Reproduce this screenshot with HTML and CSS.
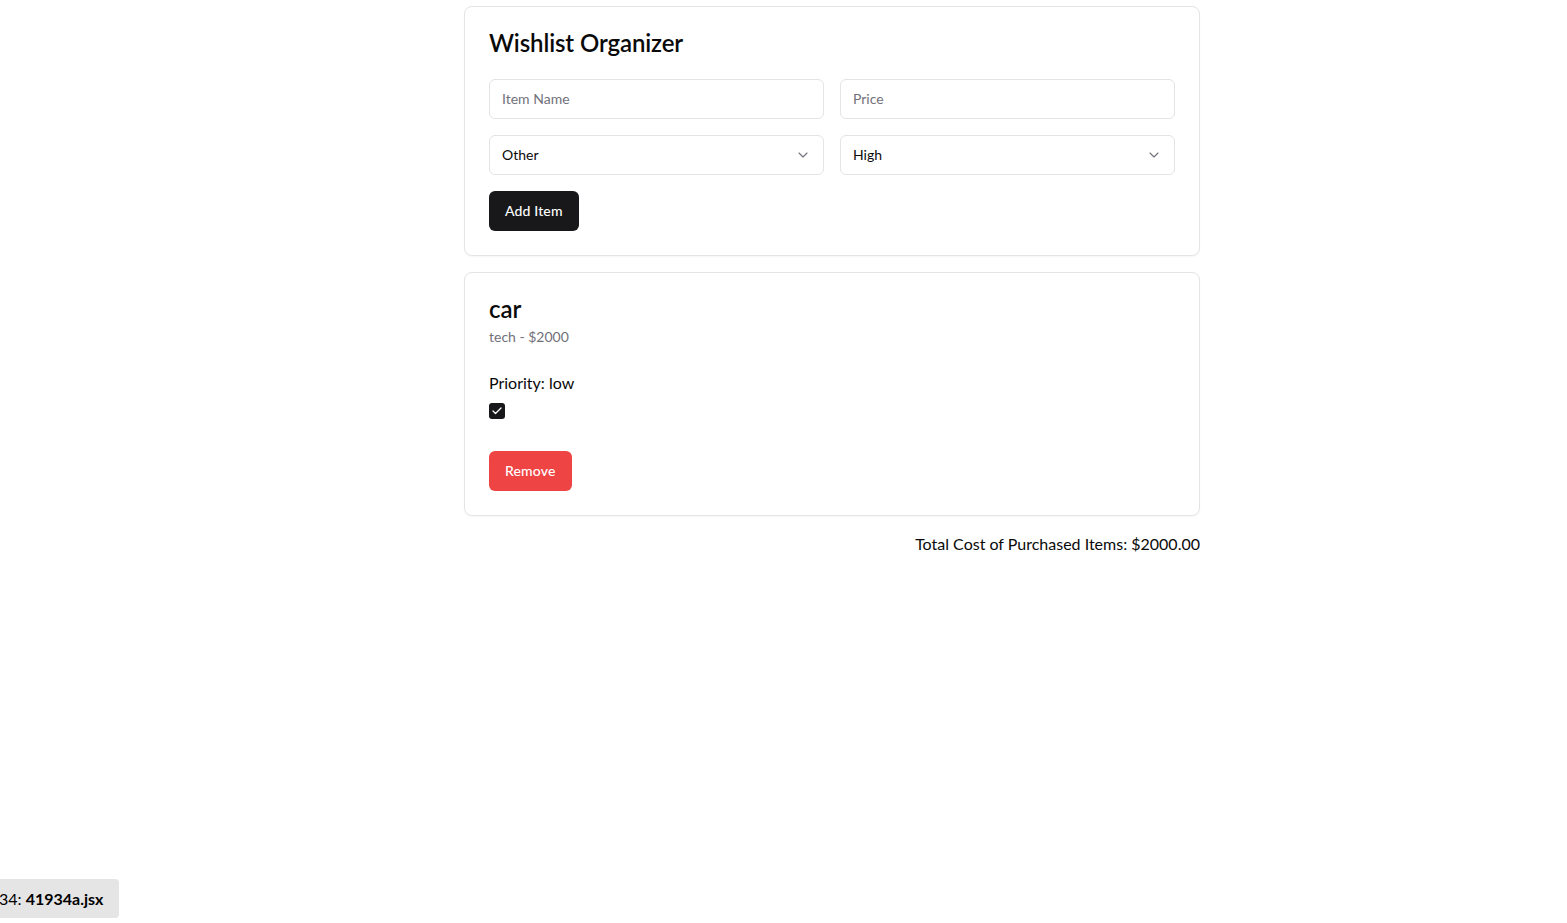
FILE: index.html
```html
<!DOCTYPE html>
<html lang="en">
<head>
<meta charset="utf-8">
<title>Wishlist Organizer</title>
<link rel="stylesheet" href="styles.css">
</head>
<body>
<main class="page">
  <section class="card form-card">
    <div class="card-header">
      <h1 class="title">Wishlist Organizer</h1>
    </div>
    <div class="card-content">
      <div class="grid">
        <input class="field" type="text" placeholder="Item Name">
        <input class="field" type="text" placeholder="Price">
        <div class="select"><span>Other</span>
          <svg width="16" height="16" viewBox="0 0 24 24" fill="none" stroke="#71717a" stroke-width="1.6" stroke-linecap="round" stroke-linejoin="round"><path d="m6 9 6 6 6-6"/></svg>
        </div>
        <div class="select"><span>High</span>
          <svg width="16" height="16" viewBox="0 0 24 24" fill="none" stroke="#71717a" stroke-width="1.6" stroke-linecap="round" stroke-linejoin="round"><path d="m6 9 6 6 6-6"/></svg>
        </div>
      </div>
      <button class="btn btn-dark">Add Item</button>
    </div>
  </section>

  <section class="card item-card">
    <div class="card-header item-header">
      <h2 class="title">car</h2>
      <p class="item-meta">tech - $2000</p>
    </div>
    <div class="card-content item-content">
      <p class="item-priority">Priority: low</p>
      <div class="check-row">
        <span class="checkbox">
          <svg width="12" height="12" viewBox="0 0 24 24" fill="none" stroke="#fff" stroke-width="2.5" stroke-linecap="round" stroke-linejoin="round"><path d="M20 6 9 17l-5-5"/></svg>
        </span>
      </div>
    </div>
    <div class="card-footer">
      <button class="btn btn-red">Remove</button>
    </div>
  </section>

  <p class="total">Total Cost of Purchased Items: $2000.00</p>
</main>

<div class="badge"><span class="badge-text">34: <b>41934a.jsx</b></span></div>
</body>
</html>
```

FILE: styles.css
```css
* { box-sizing: border-box; }
html, body { margin: 0; padding: 0; background: #fff; }
body {
  font-family: Lato, "Open Sans", sans-serif;
  color: #0a0a0a;
}
.page {
  width: 768px;
  margin-left: 448px;
  padding: 6px 16px 16px;
  display: flex;
  flex-direction: column;
  gap: 16px;
}
.card {
  border: 1px solid #e4e4e7;
  border-radius: 8px;
  background: #fff;
  box-shadow: 0 1px 2px rgba(0,0,0,0.04);
}
.card-header {
  padding: 24px;
  display: flex;
  flex-direction: column;
  gap: 6px;
}
.card-content { padding: 0 24px 24px; }
.card-footer { padding: 0 24px 24px; display: flex; }
.title {
  margin: 0;
  font-size: 24px;
  line-height: 23px;
  font-weight: 600;
  letter-spacing: -0.1px;
}
.item-header .title { line-height: 24px; }
.card-header .title { padding-bottom: 1px; }
.item-header .title { padding-bottom: 0; }
.grid {
  display: grid;
  grid-template-columns: 1fr 1fr;
  gap: 16px;
  margin-bottom: 16px;
}
.field, .select {
  height: 40px;
  border: 1px solid #e4e4e7;
  border-radius: 6px;
  padding: 0 12px 1px;
  font: inherit;
  font-size: 14px;
  color: #0a0a0a;
  background: #fff;
}
.field::placeholder { color: #71717a; }
.select {
  display: flex;
  align-items: center;
  justify-content: space-between;
}
.select svg { margin-top: 1px; }
.btn {
  height: 40px;
  border: none;
  border-radius: 6px;
  padding: 0 16px 1px;
  font: inherit;
  font-size: 14px;
  font-weight: 500;
  letter-spacing: 0.15px;
  color: #fff;
}
.btn-dark { background: #18181b; }
.btn-red { background: #ef4444; }
.item-meta { margin: 0; font-size: 14px; line-height: 20px; color: #71717a; }
.item-priority { margin: 0; font-size: 16px; line-height: 24px; }
.check-row { margin-top: 8px; height: 24px; }
.checkbox {
  width: 16px; height: 16px;
  border-radius: 3px;
  background: #18181b;
  display: flex; align-items: center; justify-content: center;
}
.total { margin: 0; text-align: right; font-size: 16px; line-height: 24px; }
.badge {
  position: fixed;
  left: 0; bottom: 5px;
  height: 39px;
  width: 119px;
  background: #e5e5e5;
  border-radius: 0 4px 4px 0;
  display: flex; align-items: center;
  overflow: hidden;
  font-size: 16px;
  color: #000;
}
.badge-text { margin-left: -1px; white-space: nowrap; }
```
